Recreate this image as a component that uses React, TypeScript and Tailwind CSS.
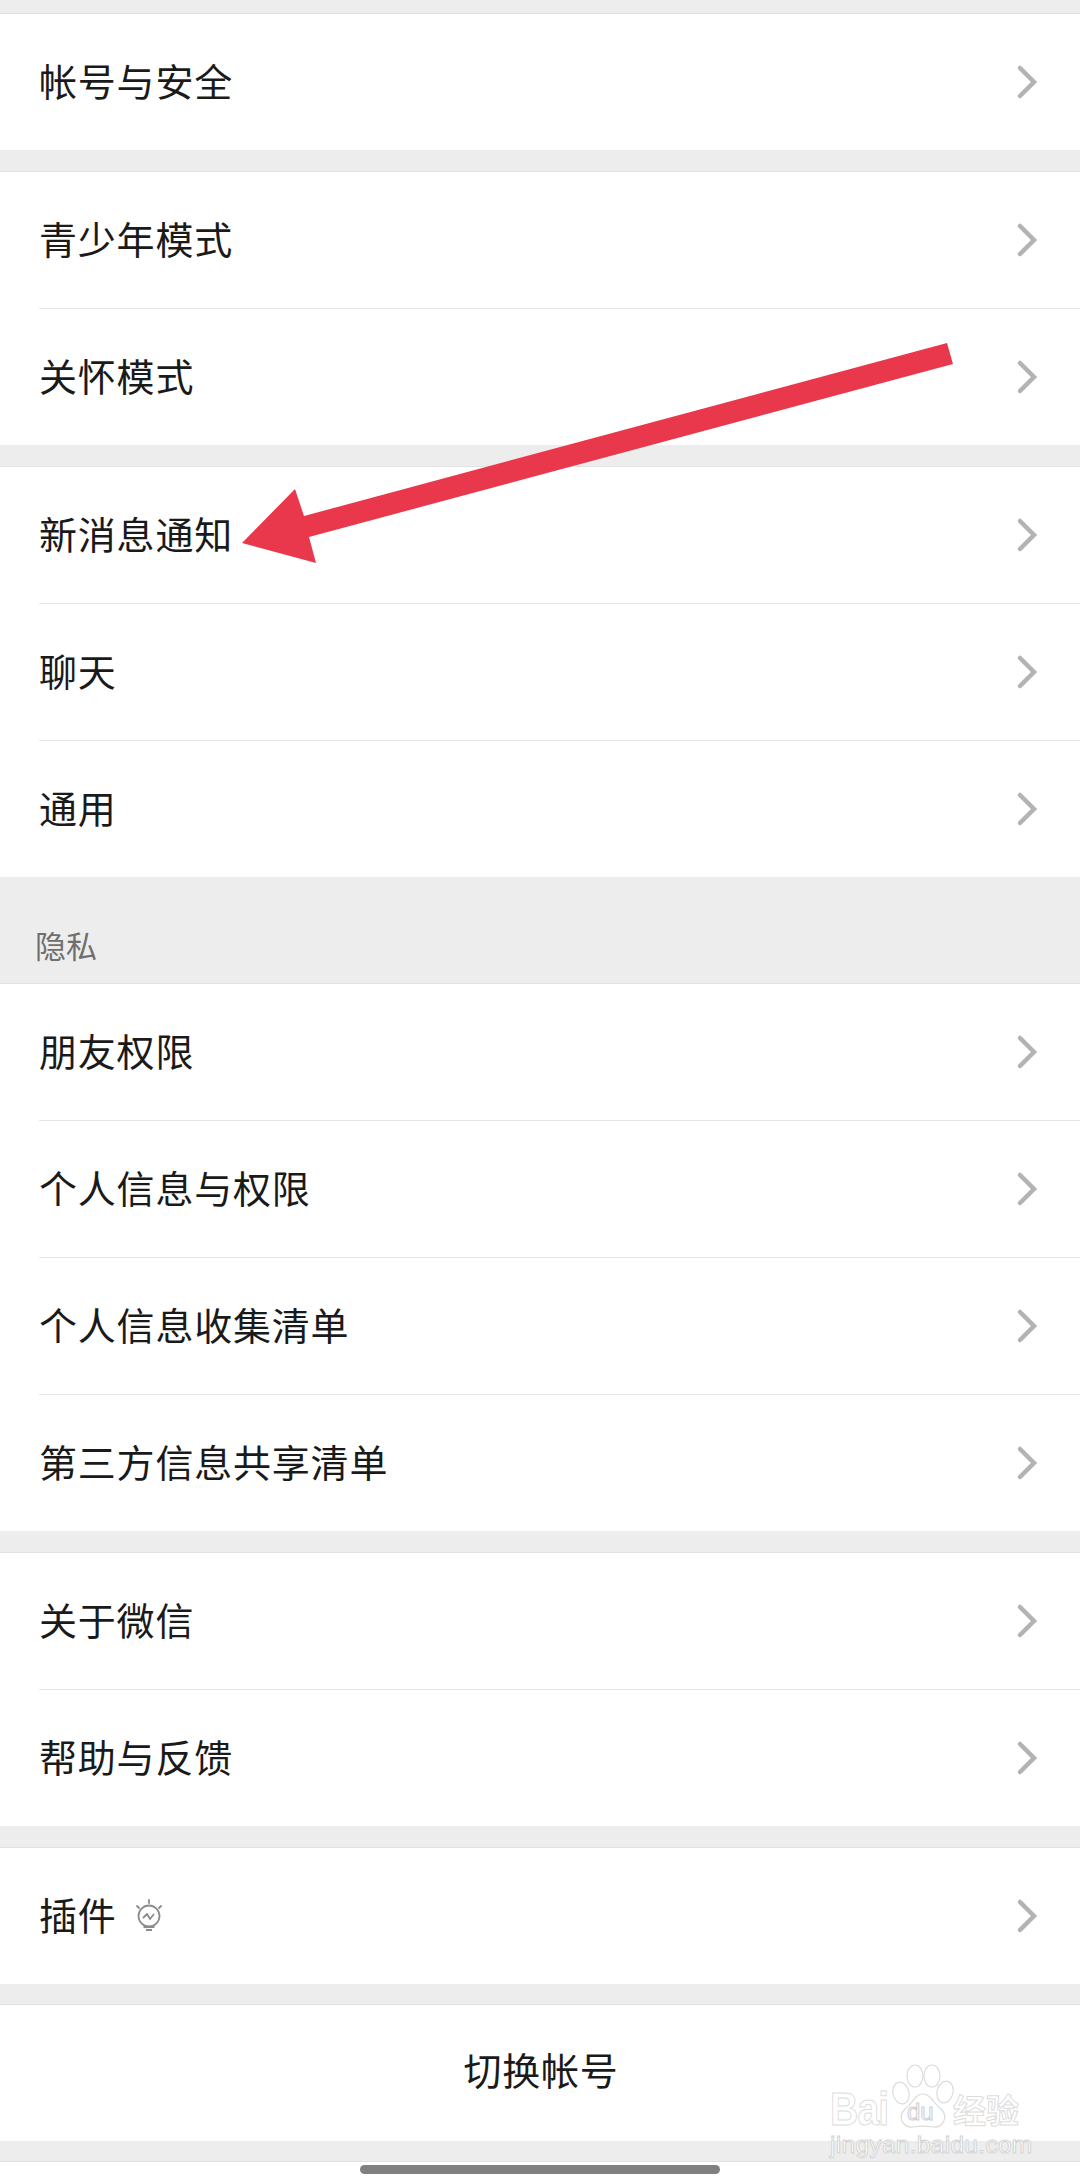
import { ReactNode } from "react";

const FONT = "font-['Noto_Sans_CJK_SC','Noto_Sans',sans-serif]";

function Chevron() {
  return (
    <svg width="24" height="38" viewBox="0 0 24 38" fill="none" className="shrink-0">
      <path d="M4 5 L18 19 L4 33" stroke="#b3b3b3" strokeWidth="4.5" strokeLinecap="round" strokeLinejoin="miter" />
    </svg>
  );
}

function BulbIcon() {
  return (
    <svg width="30" height="36" viewBox="0 0 30 36" fill="none" stroke="#8c8c8c" className="mt-[4px] ml-[17px]">
      <circle cx="15" cy="18" r="10.5" strokeWidth="1.8" />
      <path d="M9 20 L13 16 L16 21 L20 16" strokeWidth="1.8" strokeLinejoin="round" />
      <path d="M15 2 V5 M3 8 L5 10 M27 8 L25 10" strokeWidth="1.8" strokeLinecap="round" />
      <path d="M9.5 29 H20.5" strokeWidth="2" />
      <path d="M12 32 H18" strokeWidth="2" />
    </svg>
  );
}

function Row({ label, extra, last }: { label: string; extra?: ReactNode; last?: boolean }) {
  return (
    <>
      <div className="flex h-[136px] items-center justify-between bg-white pr-[40px] pl-[39px]">
        <div className="flex items-center pb-[5px]">
          <span className="text-[38px] leading-none font-normal tracking-[0.8px] text-[#1a1a1a]">{label}</span>
          {extra}
        </div>
        <Chevron />
      </div>
      {!last && (
        <div className="bg-white pl-[39px]">
          <div className="h-px bg-[#e6e6e6]" />
        </div>
      )}
    </>
  );
}

function Group({ items }: { items: string[] }) {
  return (
    <div>
      {items.map((item, i) => (
        <Row key={item} label={item} last={i === items.length - 1} />
      ))}
    </div>
  );
}

function Gap({ className = "h-[22px]" }: { className?: string }) {
  return <div className={`${className} border-b border-[#e2e2e2] bg-[#ededed]`} />;
}

function RedArrow() {
  return (
    <svg width="1080" height="600" viewBox="0 0 1080 600" className="pointer-events-none absolute top-0 left-0">
      <polygon
        points="947,343 953,364 309,537 316,563 242,543 295,489 304,516"
        fill="#e9384c"
      />
    </svg>
  );
}

function Watermark() {
  return (
    <div className="pointer-events-none absolute top-[2060px] left-[826px] h-[100px] w-[200px]">
      <div className="absolute top-[26px] left-[4px] origin-left scale-x-[0.85] font-['Liberation_Sans',sans-serif] text-[46px] leading-[46px] font-bold tracking-[-1px] text-white [-webkit-text-stroke:1px_#dcdcdc]">
        Bai
      </div>
      <svg width="64" height="68" viewBox="0 0 64 68" fill="#fff" stroke="#dcdcdc" strokeWidth="1.2" className="absolute top-[3px] left-[65px]">
        <ellipse cx="10" cy="30" rx="8" ry="11" transform="rotate(-15 10 30)" />
        <ellipse cx="24" cy="13" rx="8" ry="11" />
        <ellipse cx="41" cy="13" rx="8" ry="11" />
        <ellipse cx="54" cy="29" rx="8" ry="11" transform="rotate(15 54 29)" />
        <path d="M32 31 C40 31 42 40 50 46 C58 54 52 65 42 64 C36 63 28 63 22 64 C12 65 6 54 14 46 C22 40 24 31 32 31 Z" />
      </svg>
      <div className="absolute top-[40px] left-[81px] font-['Liberation_Sans',sans-serif] text-[24px] leading-[24px] text-white [-webkit-text-stroke:1px_#cfcfcf]">
        du
      </div>
      <div className="absolute top-[31px] left-[127px] text-[33px] leading-[36px] font-bold whitespace-nowrap text-white [-webkit-text-stroke:1px_#dcdcdc]">
        经验
      </div>
      <div className="absolute top-[72px] left-[4px] font-['Liberation_Sans',sans-serif] text-[24.5px] leading-[26px] tracking-[0.3px] whitespace-nowrap text-white [-webkit-text-stroke:1px_#d4d4d4]">
        jingyan.baidu.com
      </div>
    </div>
  );
}

export default function App() {
  return (
    <div className={`relative h-[2180px] w-[1080px] overflow-hidden bg-white ${FONT}`}>
      <Gap className="h-[14px]" />
      <Group items={["帐号与安全"]} />
      <Gap />
      <Group items={["青少年模式", "关怀模式"]} />
      <Gap />
      <Group items={["新消息通知", "聊天", "通用"]} />
      <div className="flex h-[107px] items-end border-b border-[#e2e2e2] bg-[#ededed] pb-[20px] pl-[35px]">
        <span className="text-[31px] leading-[36px] font-normal text-[#6f6f6f]">隐私</span>
      </div>
      <Group items={["朋友权限", "个人信息与权限", "个人信息收集清单", "第三方信息共享清单"]} />
      <Gap />
      <Group items={["关于微信", "帮助与反馈"]} />
      <Gap />
      <Row label="插件" extra={<BulbIcon />} last />
      <Gap className="h-[21px]" />
      <div className="flex h-[136px] items-center justify-center bg-white">
        <span className="ml-[2px] pb-[8px] text-[38px] leading-none font-normal tracking-[0.8px] text-[#1a1a1a]">切换帐号</span>
      </div>
      <Gap className="h-[21px]" />
      <div className="flex h-[18px] items-start justify-center pt-[3px]">
        <div className="h-[9px] w-[360px] rounded-full bg-[#808080]" />
      </div>
      <RedArrow />
      <Watermark />
    </div>
  );
}
